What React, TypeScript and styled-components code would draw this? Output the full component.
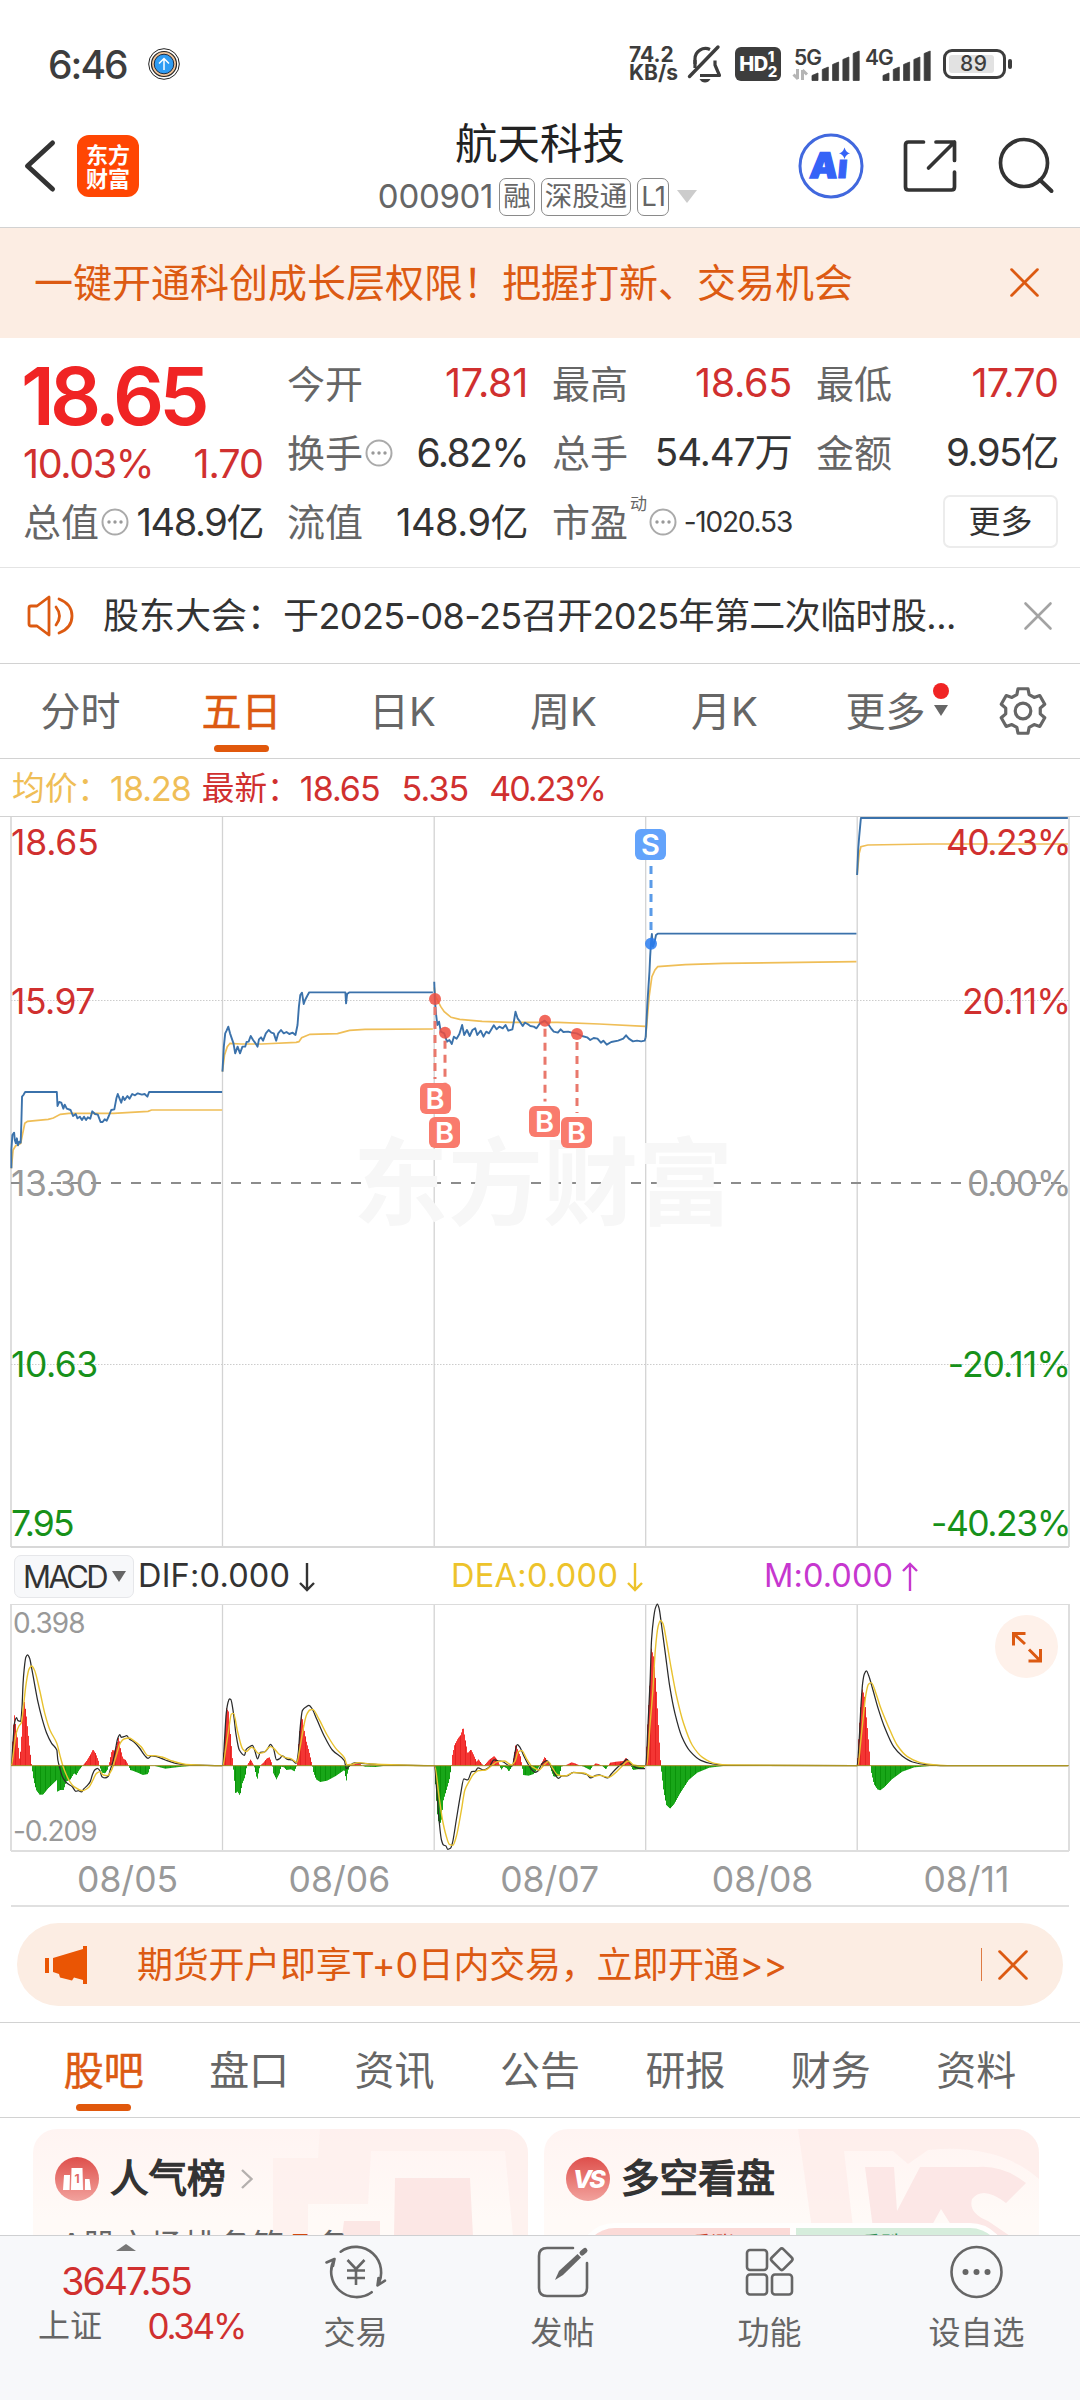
import React from "react";
import styled, { createGlobalStyle } from "styled-components";

const C = {
  ink: "#333333",
  grey: "#666666",
  light: "#999999",
  line: "#d2d2d2",
  red: "#d0302f",
  green: "#17911a",
  orange: "#dc5a12",
  peach: "#fcede3",
  blue: "#3b72ab",
  yellow: "#efbe57",
};

const Global = createGlobalStyle`
  * { box-sizing: border-box; }
  html, body { margin: 0; padding: 0; background: #ffffff; }
  body {
    width: 1080px;
    height: 2400px;
    overflow: hidden;
    font-family: Inter, "Noto Sans CJK SC", sans-serif;
    line-height: 1;
    color: ${C.ink};
  }
  svg { display: block; flex: none; overflow: visible; }
`;

const Page = styled.main`
  width: 1080px;
  height: 2400px;
  display: flex;
  flex-direction: column;
  overflow: hidden;
`;

interface TxtProps {
  $size: number;
  $color?: string;
  $ls?: number;
  $weight?: number;
  $ml?: number;
  $mt?: number;
}
const Txt = styled.span<TxtProps>`
  font-size: ${(p) => p.$size}px;
  color: ${(p) => p.$color ?? C.ink};
  letter-spacing: ${(p) => p.$ls ?? 0}px;
  margin-left: ${(p) => p.$ml ?? 0}px;
  margin-top: ${(p) => p.$mt ?? 0}px;
  font-weight: ${(p) => p.$weight ?? 400};
  white-space: pre;
  line-height: 1;
`;

/* ---------- status bar ---------- */

const StatusBar = styled.div`
  height: 104px;
  padding: 24px 68px 0 48px;
  display: flex;
  align-items: center;
  gap: 20px;
  flex: none;
`;
const StatusRight = styled.div`
  margin-left: auto;
  display: flex;
  align-items: center;
`;
const Speed = styled.div`
  width: 59px;
  font-size: 21px;
  font-weight: 700;
  line-height: 18px;
  color: #3d3d3d;
`;
const HdBox = styled.div`
  width: 46px;
  height: 34px;
  margin: 0 11px 0 13px;
  border-radius: 6px;
  background: #3d3d3d;
  color: #fff;
  display: flex;
  align-items: center;
  justify-content: center;
  font-size: 20px;
  font-weight: 800;
  letter-spacing: -0.5px;
`;
const HdNums = styled.div`
  display: flex;
  flex-direction: column;
  font-size: 15px;
  line-height: 15px;
`;
const Signal = styled.div`
  width: 71px;
  height: 34px;
  display: grid;
`;
const SignalName = styled.div`
  grid-area: 1 / 1;
  padding-left: 2px;
  font-size: 21px;
  font-weight: 600;
  letter-spacing: -1px;
  color: #3d3d3d;
`;
const SignalArt = styled.svg`
  grid-area: 1 / 1;
`;
const Battery = styled.div`
  width: 63px;
  height: 30px;
  margin-left: 9px;
  border: 3px solid #3d3d3d;
  border-radius: 9px;
  padding: 3px;
`;
const BatteryFill = styled.div`
  width: 45px;
  height: 18px;
  padding-left: 11px;
  border-radius: 3px;
  background: #e2e2e2;
  font-size: 21px;
  font-weight: 500;
  line-height: 18px;
  letter-spacing: 0.5px;
  color: #3d3d3d;
`;
const BatteryNub = styled.div`
  width: 4px;
  height: 10px;
  margin-left: 2px;
  border-radius: 2px;
  background: #3d3d3d;
`;

function Bars({ name, data }: { name: string; data?: boolean }) {
  const tops = [26, 20, 15, 10, 4];
  return (
    <Signal>
      <SignalName>{name}</SignalName>
      <SignalArt width="71" height="34" viewBox="0 0 71 34">
        {tops.map((t, i) => (
          <path
            key={i}
            d={`M${20 + i * 10.3} 33.5V${t + 2.5}l6 -2.5V33.5z`}
            fill="#3d3d3d"
            stroke="#3d3d3d"
            strokeWidth="0.8"
            strokeLinejoin="round"
          />
        ))}
        {data && (
          <path d="M5.500 22V32M1.500 27.500l4.500 4.500M10.500 33V23M15 27.500l-4.500-4.500" stroke="#b5b5b5" strokeWidth="3" fill="none" />
        )}
      </SignalArt>
    </Signal>
  );
}

function Status() {
  return (
    <StatusBar>
      <Txt $size={39} $weight={500} $color="#3d3d3d" $ls={-2}>6:46</Txt>
      <svg width="34" height="34" viewBox="0 0 34 34">
        <circle cx="17" cy="17" r="15.300" fill="#fff" stroke="#222" strokeWidth="1" />
        <circle cx="17" cy="17" r="12.500" fill="#edc298" stroke="#222" strokeWidth="1.200" />
        <circle cx="17" cy="17" r="9.800" fill="#2f9cf3" stroke="#1d2d44" strokeWidth="1" />
        <path d="M17 23V12M12 16.500l5-5 5 5" stroke="#fff" strokeWidth="1.500" fill="none" />
      </svg>
      <StatusRight>
        <Speed>74.2<br />KB/s</Speed>
        <svg width="34" height="38" viewBox="0 0 34 38">
          <path d="M7 19V14a10.500 10.500 0 0 1 15-9.500M27 15.500V20l4.500 10.500H12" stroke="#3d3d3d" strokeWidth="3.200" fill="none" strokeLinejoin="round" />
          <path d="M7 15v8" stroke="#3d3d3d" strokeWidth="3.200" />
          <path d="M1.500 31.500L30 2" stroke="#3d3d3d" strokeWidth="3.400" strokeLinecap="round" />
          <path d="M11.500 34h11q-2 3.500-5.500 3.500T11.500 34z" fill="#3d3d3d" />
        </svg>
        <HdBox>HD<HdNums><span>1</span><span>2</span></HdNums></HdBox>
        <Bars name="5G" data />
        <Bars name="4G" />
        <Battery><BatteryFill>89</BatteryFill></Battery>
        <BatteryNub />
      </StatusRight>
    </StatusBar>
  );
}

/* ---------- header ---------- */

const HeaderBar = styled.header`
  height: 124px;
  border-bottom: 1px solid ${C.line};
  display: grid;
  grid-template-columns: 360px 360px 360px;
  flex: none;
`;
const HeaderLeft = styled.div`
  display: flex;
  align-items: center;
  padding-left: 24px;
`;
const AppLogo = styled.div`
  width: 62px;
  height: 62px;
  margin-left: 22px;
  padding-top: 8px;
  border-radius: 12px;
  background: #ff4603;
  color: #fff;
  font-size: 22px;
  font-weight: 700;
  line-height: 24px;
  text-align: center;
`;
const TitleBox = styled.div`
  display: flex;
  flex-direction: column;
  align-items: center;
  padding-top: 19px;
  gap: 11px;
`;
const CodeRow = styled.div`
  height: 40px;
  display: flex;
  align-items: center;
  gap: 6px;
  margin-left: -3px;
`;
const Tag = styled.span<{ $ls?: number }>`
  height: 38px;
  padding: 0 3px;
  border: 1.5px solid #8a8a8a;
  border-radius: 7px;
  font-size: 27.5px;
  line-height: 35px;
  letter-spacing: ${(p) => p.$ls ?? 0}px;
  color: ${C.grey};
`;
const HeaderRight = styled.div`
  display: flex;
  align-items: center;
  padding: 1px 0 0 78px;
`;
const ShareIcon = styled.svg`
  margin-left: 39px;
`;
const SearchIcon = styled.svg`
  margin-left: 42px;
`;

function Header() {
  return (
    <HeaderBar>
      <HeaderLeft>
        <svg width="31" height="52" viewBox="0 0 31 52">
          <path d="M28.500 3L3.500 26l25 23" stroke="#333" strokeWidth="5" fill="none" strokeLinecap="round" strokeLinejoin="round" />
        </svg>
        <AppLogo>东方<br />财富</AppLogo>
      </HeaderLeft>
      <TitleBox>
        <Txt $size={42.5} $color="#222">航天科技</Txt>
        <CodeRow>
          <Txt $size={33} $color={C.grey} $ls={-0.3}>000901</Txt>
          <Tag>融</Tag>
          <Tag>深股通</Tag>
          <Tag $ls={-0.8}>L1</Tag>
          <svg width="24" height="14" viewBox="0 0 24 14"><path d="M2 0h20L12 13z" fill="#ccc" /></svg>
        </CodeRow>
      </TitleBox>
      <HeaderRight>
        <svg width="66" height="66" viewBox="0 0 66 66">
          <circle cx="33" cy="33" r="31" fill="none" stroke="#4168de" strokeWidth="3" />
          <text x="12" y="45" fontSize="35" fontWeight="900" fill="#3563f7" stroke="#3563f7" strokeWidth="1.500" transform="skewX(-5) translate(3 0)" fontFamily="Inter, sans-serif">A</text>
          <text x="39" y="45.500" fontSize="33" fontWeight="900" fill="#3563f7" stroke="#3563f7" strokeWidth="1" transform="skewX(-5) translate(4 0)" fontFamily="Inter, sans-serif">ı</text>
          <path d="M46.500 14.500q1.500 5 5.500 5.800-4 1-5.500 5.700-1.500-4.700-5.500-5.700 4-.8 5.500-5.800z" fill="#3563f7" />
        </svg>
        <ShareIcon width="54" height="54" viewBox="0 0 54 54">
          <path d="M20.500 3H5.500Q2.500 3 2.500 6V48Q2.500 51 5.500 51H48.500Q51.500 51 51.500 48V33M33 3H51.500V21.500M51.500 3L25.500 29" stroke="#333" strokeWidth="3.700" fill="none" strokeLinejoin="round" strokeLinecap="round" />
        </ShareIcon>
        <SearchIcon width="56" height="56" viewBox="0 0 56 56">
          <circle cx="25" cy="25" r="23.500" stroke="#333" strokeWidth="3.700" fill="none" />
          <path d="M41 42L52.500 53" stroke="#333" strokeWidth="4" strokeLinecap="round" />
        </SearchIcon>
      </HeaderRight>
    </HeaderBar>
  );
}

/* ---------- banner ---------- */

const Banner = styled.div`
  height: 110px;
  padding: 0 41px 1px 34px;
  background: ${C.peach};
  display: flex;
  align-items: center;
  justify-content: space-between;
  flex: none;
`;

function Cross({ size, color, w = 2.6 }: { size: number; color: string; w?: number }) {
  return (
    <svg width={size} height={size} viewBox="0 0 28 28">
      <path d="M1.500 1.500l25 25M26.500 1.500l-25 25" stroke={color} strokeWidth={w} strokeLinecap="round" />
    </svg>
  );
}

/* ---------- quote ---------- */

const Quote = styled.section`
  height: 230px;
  padding: 11px 22px 0 23px;
  border-bottom: 1px solid #e4e4e4;
  display: grid;
  grid-template-columns: 240px 241px 240px 242px;
  column-gap: 24px;
  flex: none;
`;
const QCol = styled.div`
  display: grid;
  grid-template-rows: 69px 69px 69px;
`;
const QFirst = styled(QCol)`
  grid-template-rows: 93px 45px 69px;
`;
const QRow = styled.div<{ $end?: boolean }>`
  display: flex;
  align-items: center;
  justify-content: ${(p) => (p.$end ? "flex-end" : "space-between")};
`;
const Label = styled.span`
  display: flex;
  align-items: center;
  gap: 2px;
  font-size: 38px;
  color: ${C.grey};
`;
const Sup = styled.span`
  align-self: flex-start;
  font-size: 17px;
  margin-top: -7px;
`;
const MoreButton = styled.button`
  width: 115px;
  height: 53px;
  padding: 0;
  border: 2px solid #ececec;
  border-radius: 7px;
  background: #fff;
  font: 400 32px/1 Inter, "Noto Sans CJK SC", sans-serif;
  color: ${C.ink};
`;

function Dots() {
  return (
    <svg width="28" height="28" viewBox="0 0 28 28">
      <circle cx="14" cy="14" r="12.500" fill="none" stroke="#aaa" strokeWidth="2" />
      {[8, 14, 20].map((x) => <circle key={x} cx={x} cy="14" r="1.700" fill="#999" />)}
    </svg>
  );
}

function QuoteBlock() {
  return (
    <Quote>
      <QFirst>
        <QRow><Txt $size={80} $weight={600} $color="#f02424" $ls={-4.9} $ml={-2}>18.65</Txt></QRow>
        <QRow>
          <Txt $size={39.5} $color={C.red} $ls={-1.4}>10.03%</Txt>
          <Txt $size={39.5} $color={C.red} $ls={-1}>1.70</Txt>
        </QRow>
        <QRow>
          <Label>总值<Dots /></Label>
          <Txt $size={38} $ls={-1.4}>148.9亿</Txt>
        </QRow>
      </QFirst>
      <QCol>
        <QRow><Label>今开</Label><Txt $size={39.5} $color={C.red} $ls={-0.3}>17.81</Txt></QRow>
        <QRow><Label>换手<Dots /></Label><Txt $size={39} $ls={-1.6}>6.82%</Txt></QRow>
        <QRow><Label>流值</Label><Txt $size={38} $ls={-0.5}>148.9亿</Txt></QRow>
      </QCol>
      <QCol>
        <QRow><Label>最高</Label><Txt $size={39.5} $color={C.red} $ls={-0.3}>18.65</Txt></QRow>
        <QRow><Label>总手</Label><Txt $size={38.5} $ls={-1}>54.47万</Txt></QRow>
        <QRow>
          <Label>市盈<Sup>动</Sup><Dots /></Label>
          <Txt $size={28} $ls={-1.2}>-1020.53</Txt>
        </QRow>
      </QCol>
      <QCol>
        <QRow><Label>最低</Label><Txt $size={39.5} $color={C.red} $ls={-0.9}>17.70</Txt></QRow>
        <QRow><Label>金额</Label><Txt $size={38.5} $ls={-1.5}>9.95亿</Txt></QRow>
        <QRow $end><MoreButton>更多</MoreButton></QRow>
      </QCol>
    </Quote>
  );
}

/* ---------- notice ---------- */

const Notice = styled.div`
  height: 96px;
  padding: 0 28px 0 26px;
  border-bottom: 1px solid ${C.line};
  display: flex;
  align-items: center;
  flex: none;
`;
const NoticeText = styled.div`
  flex: 1;
  padding-left: 28px;
`;

/* ---------- period tabs ---------- */

const PeriodTabs = styled.nav`
  height: 95px;
  border-bottom: 1px solid ${C.line};
  display: grid;
  grid-template-columns: repeat(6, 161px) 114px;
  flex: none;
`;
const Tab = styled.div<{ $on?: boolean }>`
  display: grid;
  grid-template-rows: 81px 7px;
  justify-items: center;
  align-items: center;
  font-size: 40px;
  -webkit-text-stroke: ${(p) => (p.$on ? "0.5px" : "0")} ${C.orange};
  color: ${(p) => (p.$on ? C.orange : C.grey)};
  &::after {
    content: "";
    width: 55px;
    height: 7px;
    border-radius: 4px;
    background: ${(p) => (p.$on ? "#e1580c" : "transparent")};
  }
`;
const TabText = styled.span`
  position: relative;
  padding-top: 14px;
`;
const MoreMark = styled.svg`
  position: absolute;
  left: 82px;
  top: 5px;
`;
const GearCell = styled.div`
  display: flex;
  align-items: center;
  justify-content: center;
`;

function Gear() {
  const pts: string[] = [];
  for (let i = 0; i < 6; i++) {
    const a = (i * Math.PI) / 3 - Math.PI / 2;
    const at = (r: number, d: number) => `${(25 + r * Math.cos(a + d)).toFixed(2)},${(25 + r * Math.sin(a + d)).toFixed(2)}`;
    pts.push(at(17.5, -0.36), at(22.8, -0.22), at(22.8, 0.22), at(17.5, 0.36));
  }
  return (
    <svg width="50" height="50" viewBox="0 0 50 50">
      <polygon points={pts.join(" ")} fill="none" stroke={C.grey} strokeWidth="3.200" strokeLinejoin="round" />
      <circle cx="25" cy="25" r="7.800" fill="none" stroke={C.grey} strokeWidth="3.200" />
    </svg>
  );
}

/* ---------- price chart ---------- */

const Legend = styled.div`
  height: 58px;
  padding: 2px 0 0 12px;
  border-bottom: 1px solid ${C.line};
  display: flex;
  align-items: center;
  flex: none;
`;
const ChartBox = styled.div`
  position: relative;
  height: 731px;
  flex: none;
`;
const AxisLabel = styled.span<{ $y: number; $right?: boolean; $color: string; $ls?: number }>`
  position: absolute;
  top: ${(p) => p.$y - 17}px;
  ${(p) => (p.$right ? "right: 10px;" : "left: 11px;")}
  font-size: 35.5px;
  line-height: 36px;
  letter-spacing: ${(p) => p.$ls ?? (p.$right ? -1.5 : -0.2)}px;
  color: ${(p) => p.$color};
`;
const Watermark = styled.span`
  position: absolute;
  left: 353px;
  top: 317px;
  font-size: 95px;
  line-height: 100px;
  font-weight: 700;
  color: #f7f7f7;
`;
const Marker = styled.span<{ $x: number; $y: number; $sell?: boolean }>`
  position: absolute;
  left: ${(p) => p.$x}px;
  top: ${(p) => p.$y}px;
  width: 31px;
  height: 31px;
  border-radius: 6px;
  background: ${(p) => (p.$sell ? "#63a3fb" : "#f97b6d")};
  color: #fff;
  font-size: 29px;
  font-weight: 600;
  line-height: 31px;
  text-align: center;
`;

type Pts = number[];

/* Series are sampled on a fine grid of 2.904 x 3 units per pixel. */
const GRID = "scale(0.34436 0.33333)";

const price: Pts[] = [
  [33,1255,33,1200,36,1155,41,1148,43,1170,46,1180,49,1165,52,1186,56,1175,60,1178,62,1120,64,1040,68,1035,73,1026,165,1026,167,1068,172,1056,178,1058,184,1076,188,1064,194,1076,205,1080,212,1098,220,1092,225,1105,232,1100,238,1110,244,1100,250,1110,255,1102,262,1106,268,1084,276,1092,284,1094,292,1116,298,1116,304,1108,310,1112,316,1098,323,1080,332,1078,338,1045,342,1032,347,1045,352,1058,357,1040,362,1050,370,1038,376,1046,384,1032,392,1036,400,1030,412,1034,420,1032,428,1040,433,1026,645,1026],
  [646,965,650,890,654,850,658,842,663,830,668,850,673,865,678,880,683,910,690,890,697,910,704,890,712,890,716,876,722,875,728,858,735,870,742,880,748,890,752,868,758,862,764,872,772,850,780,840,788,848,795,850,802,872,808,850,816,840,824,850,832,846,840,852,850,848,858,855,864,825,868,770,872,735,877,728,882,762,886,750,892,738,898,727,1003,727,1005,760,1008,732,1015,727,1257,727],
  [1261,695,1263,750,1266,790,1270,825,1275,815,1280,845,1290,850,1298,875,1305,870,1312,882,1318,860,1326,866,1334,852,1342,825,1348,855,1356,840,1364,858,1372,840,1380,835,1386,855,1396,842,1404,860,1412,845,1420,850,1434,826,1442,838,1450,830,1460,835,1468,825,1476,842,1488,838,1493,810,1497,785,1503,805,1510,815,1518,828,1524,818,1532,822,1540,828,1550,830,1558,835,1568,820,1582,812,1590,820,1600,835,1608,845,1620,848,1628,838,1636,846,1650,845,1660,848,1675,850,1690,858,1705,862,1714,870,1724,864,1735,866,1745,878,1752,872,1762,884,1775,876,1795,872,1810,866,1818,856,1826,866,1838,874,1850,872,1862,874,1872,872,1875,862],
  [1875,862,1880,760,1886,665,1888,620,1891,570,1893,552,1896,590,1901,575,1905,555,1910,551,2487,551],
  [2489,375,2492,300,2495,260,2500,204,3101,204],
];
const average: Pts[] = [
  [33,1255,38,1200,45,1188,60,1180,66,1150,72,1120,80,1114,140,1108,155,1104,175,1093,200,1090,330,1090,430,1084,440,1080,645,1080],
  [646,965,652,915,660,890,668,880,700,882,760,882,860,877,868,875,876,863,900,853,980,851,1015,841,1060,838,1257,837],
  [1261,712,1265,740,1280,770,1290,785,1310,802,1335,808,1400,814,1480,817,1568,817,1620,817,1740,822,1874,829],
  [1875,862,1885,740,1893,680,1902,660,1910,650,1990,644,2100,640,2487,635],
  [2489,375,2495,310,2500,290,2520,285,2700,282,3101,282],
];

const toPoints = (a: Pts) => {
  const out: string[] = [];
  for (let i = 0; i < a.length; i += 2) out.push(`${a[i]},${a[i + 1]}`);
  return out.join(" ");
};

const columns = [11, 222.5, 434.2, 645.7, 857.2, 1069];

const trades = [
  { dx: 435, dy: 182, bx: 419.5, by: 266 },
  { dx: 445, dy: 215.7, bx: 429, by: 300 },
  { dx: 545, dy: 203.7, bx: 529, by: 288.5 },
  { dx: 577, dy: 217, bx: 561, by: 300 },
];

function PriceChart() {
  return (
    <ChartBox>
      <Watermark>东方财富</Watermark>
      <svg width="1080" height="731" viewBox="0 0 1080 731">
        {columns.map((x, i) => (
          <path key={x} d={`M${x} 0V730`} stroke={i === 0 || i === 5 ? "#dedede" : "#d3d3d3"} strokeWidth={i === 0 || i === 5 ? 2 : 1.3} />
        ))}
        <path d="M11 183.500H1069M11 547.500H1069" stroke="#ccc" strokeWidth="1" strokeDasharray="1.500 1.500" />
        <path d="M11 730H1069" stroke="#d8d8d8" strokeWidth="2" />
        <path d="M11 366H1069" stroke="#8c8c8c" strokeWidth="1.800" strokeDasharray="10 10" />
        <g transform={`${GRID} translate(0 -201)`} fill="none">
          {average.map((a, i) => (
            <polyline key={i} points={toPoints(a)} stroke={C.yellow} strokeWidth="1.700" vectorEffect="non-scaling-stroke" />
          ))}
          {price.map((a, i) => (
            <polyline key={i} points={toPoints(a)} stroke={C.blue} strokeWidth="1.900" strokeLinejoin="round" vectorEffect="non-scaling-stroke" />
          ))}
        </g>
        {trades.map((t) => (
          <g key={t.dx}>
            <path d={`M${t.dx} ${t.dy + 8}V${t.by - 4}`} stroke="#e9786c" strokeWidth="3" strokeDasharray="8 6" />
            <circle cx={t.dx} cy={t.dy} r="6" fill="#ee4d3f" opacity="0.850" />
          </g>
        ))}
        <path d="M651 49V118" stroke="#5b9be8" strokeWidth="3" strokeDasharray="8 6" />
        <circle cx="651" cy="126.700" r="6" fill="#2a7df0" opacity="0.850" />
      </svg>
      {trades.map((t) => <Marker key={t.bx} $x={t.bx} $y={t.by}>B</Marker>)}
      <Marker $x={635} $y={12} $sell>S</Marker>
      <AxisLabel $y={25} $color={C.red}>18.65</AxisLabel>
      <AxisLabel $y={184} $color={C.red} $ls={-0.5}>15.97</AxisLabel>
      <AxisLabel $y={366} $color={C.light} $ls={-0.5}>13.30</AxisLabel>
      <AxisLabel $y={547} $color={C.green} $ls={-0.5}>10.63</AxisLabel>
      <AxisLabel $y={706} $color={C.green} $ls={-1.9}>7.95</AxisLabel>
      <AxisLabel $y={25} $color={C.red} $right>40.23%</AxisLabel>
      <AxisLabel $y={184} $color={C.red} $right $ls={-1}>20.11%</AxisLabel>
      <AxisLabel $y={366} $color={C.light} $right>0.00%</AxisLabel>
      <AxisLabel $y={547} $color={C.green} $right $ls={-1}>-20.11%</AxisLabel>
      <AxisLabel $y={706} $color={C.green} $right>-40.23%</AxisLabel>
    </ChartBox>
  );
}

/* ---------- MACD ---------- */

const MacdRow = styled.div`
  height: 56px;
  padding: 1px 0 0 14px;
  display: grid;
  grid-template-columns: 124px 313px 313px 1fr;
  align-items: center;
  flex: none;
`;
const MacdChip = styled.div`
  width: 120px;
  height: 43px;
  padding: 0 7px 0 8px;
  border: 1.5px solid #e6e7ea;
  border-radius: 7px;
  background: #f7f8fa;
  display: flex;
  align-items: center;
  justify-content: space-between;
`;
const MacdValue = styled.div`
  display: flex;
  align-items: center;
  gap: 8px;
`;
const MacdBox = styled.div`
  position: relative;
  height: 248px;
  flex: none;
`;
const MacdLabel = styled.span<{ $y: number; $ls: number }>`
  position: absolute;
  left: 13px;
  top: ${(p) => p.$y - 14}px;
  font-size: 28px;
  line-height: 28px;
  letter-spacing: ${(p) => p.$ls}px;
  color: ${C.light};
`;
const Expand = styled.button`
  position: absolute;
  left: 995px;
  top: 11px;
  width: 63px;
  height: 63px;
  padding: 0;
  border: 0;
  border-radius: 50%;
  background: #fef1ea;
  display: flex;
  align-items: center;
  justify-content: center;
`;
const Dates = styled.div`
  height: 55px;
  margin: 0 11px;
  border-bottom: 2px solid #e0e0e0;
  display: grid;
  grid-template-columns: repeat(5, 1fr);
  align-items: center;
  flex: none;
`;
const DateCell = styled.span`
  padding: 2px 0 0 66px;
  font-size: 35.5px;
  color: ${C.light};
`;

const dif: Pts[] = [
  [33,557,37,500,42,430,48,413,52,422,60,424,64,380,67,310,70,270,75,232,80,225,86,235,92,265,100,310,110,365,122,415,135,458,150,490,165,510,168,540,174,565,182,592,195,610,210,620,220,634,228,632,236,636,244,626,254,616,262,605,268,585,275,570,283,565,290,572,296,590,305,594,315,588,320,570,328,545,335,510,342,475,348,464,352,472,360,470,368,467,375,476,390,487,405,504,420,526,430,535,440,528,455,530,480,540,510,550,550,555,645,557],
  [647,557,652,480,657,400,662,368,666,357,670,358,678,400,685,460,695,510,710,526,715,508,725,500,733,496,740,512,748,537,756,517,768,516,778,505,785,493,794,505,803,540,812,536,820,528,835,538,848,540,860,550,866,520,872,440,878,392,890,380,897,376,905,384,920,418,940,465,965,510,1000,542,1006,566,1015,557,1030,549,1050,550,1120,555,1261,557],
  [1262,557,1268,630,1275,720,1282,780,1288,795,1295,798,1300,808,1308,805,1314,788,1325,720,1338,640,1347,597,1358,600,1370,575,1380,574,1388,564,1405,570,1420,562,1435,540,1448,543,1460,545,1478,557,1488,558,1495,520,1502,494,1510,502,1520,525,1535,555,1545,570,1555,577,1563,572,1575,550,1588,542,1598,555,1610,580,1622,595,1632,588,1645,588,1665,577,1690,580,1705,584,1715,594,1730,586,1740,585,1765,594,1775,582,1795,560,1810,548,1820,538,1830,550,1845,562,1860,566,1873,566],
  [1875,557,1882,430,1888,300,1892,180,1898,115,1903,85,1909,72,1914,85,1921,135,1932,220,1945,320,1960,400,1980,470,2005,515,2035,541,2070,552,2110,556,2489,557],
  [2489,557,2495,480,2500,380,2505,310,2510,282,2516,273,2522,285,2535,330,2550,385,2570,445,2595,500,2620,528,2650,546,2690,554,2740,557,3101,557],
];
const dea: Pts[] = [
  [33,557,40,510,47,460,55,438,62,428,68,380,76,310,84,268,92,258,100,270,115,330,130,400,145,450,165,490,175,530,185,565,200,600,215,620,240,632,258,622,270,600,280,580,290,575,300,585,312,587,325,568,338,525,350,488,360,477,375,474,390,483,410,500,430,527,445,527,470,531,500,543,540,553,645,557],
  [647,557,655,510,664,450,672,402,678,400,690,455,705,508,715,515,730,502,738,506,750,520,765,518,785,500,795,505,810,522,830,533,845,536,862,547,870,510,880,450,890,405,900,390,908,388,925,415,950,465,975,505,1000,533,1008,555,1020,553,1040,548,1080,552,1261,557],
  [1262,557,1275,650,1285,720,1295,765,1305,793,1315,796,1325,770,1340,690,1350,630,1362,605,1375,583,1390,572,1410,570,1430,555,1445,545,1465,543,1485,555,1495,545,1505,515,1515,512,1530,538,1548,562,1565,570,1580,555,1592,545,1605,565,1620,585,1640,588,1665,578,1695,579,1720,590,1740,586,1768,592,1785,580,1805,560,1825,543,1840,555,1873,560],
  [1878,557,1888,430,1896,330,1903,210,1911,140,1918,121,1925,130,1935,180,1950,270,1965,350,1985,430,2010,495,2040,532,2075,550,2115,555,2489,557],
  [2491,557,2500,480,2508,400,2515,340,2522,313,2530,308,2542,335,2558,385,2580,440,2605,495,2635,530,2670,547,2710,554,2760,557,3101,557],
];
const hist: Pts = [
  33,557,36,490,40,420,42,405,46,440,52,480,56,535,58,537,62,480,66,390,71,365,76,400,80,440,86,500,92,557,98,600,105,630,115,644,125,644,140,625,155,610,165,600,167,635,175,630,185,630,192,605,205,598,215,580,222,585,230,570,240,557,250,545,262,525,270,508,278,520,287,545,289,557,296,578,305,580,312,570,316,557,325,510,335,512,345,470,350,505,357,535,365,540,374,557,378,570,385,572,400,578,415,585,430,582,437,557,450,558,480,566,520,561,560,557,
  646,557,652,480,657,383,664,395,670,470,677,557,680,590,684,640,690,635,697,647,704,610,712,590,717,557,728,538,738,557,747,600,755,557,765,548,775,535,783,532,789,548,791,557,794,580,803,598,812,580,816,560,825,562,832,570,845,568,855,574,862,557,870,450,876,402,882,440,890,485,898,515,907,557,910,575,918,598,930,606,950,602,975,588,1000,570,1006,603,1010,575,1016,557,1025,553,1045,551,1052,557,1060,560,1090,561,1120,557,
  1262,557,1266,640,1271,710,1276,738,1282,720,1288,660,1298,625,1305,600,1311,557,1313,530,1320,495,1330,475,1338,465,1345,440,1350,470,1358,520,1368,508,1376,525,1384,545,1390,538,1398,550,1405,557,1410,552,1420,540,1435,528,1445,540,1452,557,1455,570,1463,560,1472,565,1478,575,1488,557,1492,530,1498,490,1503,508,1512,530,1516,557,1520,585,1535,587,1550,582,1562,565,1568,557,1575,545,1582,530,1590,545,1597,557,1602,575,1608,590,1625,588,1630,560,1640,557,1650,552,1660,547,1670,550,1685,557,1695,560,1714,570,1722,557,1730,550,1738,552,1748,557,1760,568,1766,557,1772,548,1790,545,1810,543,1818,533,1830,548,1832,557,1838,570,1850,568,1870,566,1873,557,
  1875,557,1880,440,1886,320,1892,205,1898,230,1905,310,1912,430,1919,557,1921,575,1927,630,1935,675,1946,686,1958,672,1975,640,2000,600,2025,578,2060,563,2100,558,2110,557,
  2489,557,2494,460,2499,380,2503,323,2510,345,2518,430,2524,500,2528,557,2531,580,2538,612,2548,628,2556,631,2568,622,2590,598,2620,575,2655,562,2700,558,2710,557,3101,557,
];

/* Monotone cubic through the samples, so peaks keep their height. */
const smooth = (a: Pts) => {
  const n = a.length / 2;
  const X = (i: number) => a[2 * Math.max(0, Math.min(n - 1, i))];
  const Y = (i: number) => a[2 * Math.max(0, Math.min(n - 1, i)) + 1];
  const slope = (k: number) => {
    const l = (Y(k) - Y(k - 1)) / (X(k) - X(k - 1) || 1);
    const r = (Y(k + 1) - Y(k)) / (X(k + 1) - X(k) || 1);
    return l * r <= 0 ? 0 : (2 * l * r) / (l + r);
  };
  let d = `M${X(0)} ${Y(0)}`;
  for (let i = 0; i < n - 1; i++) {
    const w = X(i + 1) - X(i);
    d += `C${X(i) + w / 3} ${Y(i) + (slope(i) * w) / 3} ${X(i + 1) - w / 3} ${Y(i + 1) - (slope(i + 1) * w) / 3} ${X(i + 1)} ${Y(i + 1)}`;
  }
  return d;
};

/* One bar per pixel column of the panel. */
const histY = (x: number) => {
  let k = 0;
  while (k + 2 < hist.length && hist[k + 2] < x) k += 2;
  const t = (x - hist[k]) / (hist[k + 2] - hist[k] || 1);
  return hist[k + 1] + t * (hist[k + 3] - hist[k + 1]);
};
const BASE = (557 - 72) / 3;
const buildBars = () => {
  const bars: { x: number; y: number; fill: string }[] = [];
  for (let px = 11; px < 936; px++) {
    const y = (histY((px + 0.5) * 2.904) - 72) / 3;
    if (Math.abs(y - BASE) < 0.4) continue;
    const dark = px % 5 === 0;
    bars.push({ x: px, y, fill: y < BASE ? (dark ? "#e52222" : "#f43533") : dark ? "#0a930a" : "#18a618" });
  }
  return bars;
};
const histBars = buildBars();

function Arrow({ color, up }: { color: string; up?: boolean }) {
  return (
    <svg width="18" height="30" viewBox="0 0 18 30">
      <path d={up ? "M9 29V2M2 9l7-7 7 7" : "M9 1V28M2 21l7 7 7-7"} stroke={color} strokeWidth="2.400" fill="none" />
    </svg>
  );
}

function Macd() {
  return (
    <>
      <MacdRow>
        <MacdChip>
          <Txt $size={31} $ls={-2.6}>MACD</Txt>
          <svg width="14" height="12" viewBox="0 0 14 12"><path d="M0 0h14L7 11z" fill={C.grey} /></svg>
        </MacdChip>
        <MacdValue><Txt $size={32.5} $ls={0.2}>DIF:0.000</Txt><Arrow color={C.ink} /></MacdValue>
        <MacdValue><Txt $size={32.5} $color="#edc32b" $ls={0.3}>DEA:0.000</Txt><Arrow color="#edc32b" /></MacdValue>
        <MacdValue><Txt $size={32.5} $color="#c637cf" $ls={0.1}>M:0.000</Txt><Arrow color="#c637cf" up /></MacdValue>
      </MacdRow>
      <MacdBox>
        <svg width="1080" height="248" viewBox="0 0 1080 248">
          {columns.map((x, i) => (
            <path key={x} d={`M${x} 0V247`} stroke={i === 0 || i === 5 ? "#dedede" : "#d3d3d3"} strokeWidth={i === 0 || i === 5 ? 2 : 1.3} />
          ))}
          <path d="M11 0.500H1069" stroke="#dcdcdc" strokeWidth="1" />
          <path d="M11 247H1069" stroke="#dedede" strokeWidth="2" />
          {histBars.map((b) => (
            <rect key={b.x} x={b.x} width="1" y={Math.min(b.y, BASE)} height={Math.abs(b.y - BASE)} fill={b.fill} />
          ))}
          <g transform={`${GRID} translate(0 -72)`} fill="none">
            {dif.map((a, i) => <path key={i} d={smooth(a)} stroke="#2b2b2b" strokeWidth="1.250" vectorEffect="non-scaling-stroke" />)}
            {dea.map((a, i) => <path key={i} d={smooth(a)} stroke="#e8c22f" strokeWidth="1.400" vectorEffect="non-scaling-stroke" />)}
            <path d="M33 557H3104" stroke="#a08c22" strokeWidth="1" vectorEffect="non-scaling-stroke" />
          </g>
        </svg>
        <MacdLabel $y={19} $ls={-0.9}>0.398</MacdLabel>
        <MacdLabel $y={227} $ls={-1.1}>-0.209</MacdLabel>
        <Expand>
          <svg width="32" height="32" viewBox="0 0 32 32">
            <path d="M14.500 2.500H2.500V14.500M3 3L14 13M17.500 30H29.500V18M29 29.500L18 18.500" stroke={C.orange} strokeWidth="3" fill="none" />
          </svg>
        </Expand>
      </MacdBox>
      <Dates>
        {["08/05", "08/06", "08/07", "08/08", "08/11"].map((d) => <DateCell key={d}>{d}</DateCell>)}
      </Dates>
    </>
  );
}

/* ---------- promo ---------- */

const PromoWrap = styled.div`
  height: 116px;
  padding: 16px 17px;
  border-bottom: 1px solid ${C.line};
  flex: none;
`;
const Promo = styled.div`
  height: 83px;
  padding: 0 35px 0 28px;
  border-radius: 42px;
  background: ${C.peach};
  display: flex;
  align-items: center;
`;
const PromoText = styled.div`
  flex: 1;
  padding-left: 49px;
`;
const Divider = styled.div`
  width: 1.5px;
  height: 33px;
  margin-right: 16px;
  background: #de7a42;
`;

/* ---------- section tabs ---------- */

const SectionTabs = styled.nav`
  height: 95px;
  padding: 0 31px;
  border-bottom: 1px solid ${C.line};
  display: grid;
  grid-template-columns: repeat(7, 1fr);
  flex: none;
`;

/* ---------- cards ---------- */

const Cards = styled.div`
  height: 117px;
  padding: 11px 41px 0 33px;
  display: grid;
  grid-template-columns: 495px 495px;
  column-gap: 16px;
  overflow: hidden;
  flex: none;
`;
const Card = styled.div`
  position: relative;
  height: 200px;
  padding: 28px 22px 0;
  border-radius: 24px;
  background: linear-gradient(180deg, #fff4f2 0, #fffaf7 90px);
  overflow: hidden;
`;
const CardArt = styled.svg`
  position: absolute;
  right: 0;
  top: 0;
`;
const CardHead = styled.div`
  position: relative;
  display: flex;
  align-items: center;
  height: 44px;
`;
const CardTitle = styled.span`
  margin: 0 14px 0 11px;
  padding-bottom: 1px;
  font-size: 38.5px;
  color: ${C.ink};
  -webkit-text-stroke: 1.4px ${C.ink};
`;
const RankText = styled.p`
  position: relative;
  margin: 27px 0 0 5px;
  font-size: 33.5px;
  line-height: 36px;
  color: ${C.grey};
`;
const Hot = styled.b`
  padding: 0 5px;
  color: #d2480f;
  font-size: 33px;
`;
const Vote = styled.div`
  position: relative;
  margin: 22px 10px 0 12px;
  border: 5px solid #fffefd;
  border-radius: 40px;
  display: grid;
  grid-template-columns: 1fr 1fr;
  gap: 6px;
  background: #fffefd;
  overflow: hidden;
`;
const VoteSide = styled.div<{ $bg: string; $fg: string; $shift: number }>`
  height: 64px;
  padding: 6px 0 0 ${(p) => p.$shift}px;
  background: ${(p) => p.$bg};
  color: ${(p) => p.$fg};
  font-size: 23px;
`;
const VsText = styled.span`
  width: 44px;
  height: 44px;
  border-radius: 50%;
  background: linear-gradient(180deg, #de4f4b, #f2a29d);
  color: #fff;
  font-size: 25px;
  font-weight: 800;
  font-style: italic;
  letter-spacing: -2.5px;
  line-height: 44px;
  text-align: center;
`;

function CardsRow() {
  return (
    <Cards>
      <Card>
        <CardArt width="255" height="107" viewBox="0 0 255 107">
          <path d="M47 0H255V107H240L232 22H98L95 75H35V107H0V29H45z" fill="#fdefec" opacity="0.750" />
          <path d="M122 49H197L200 107H143V97L172 90V107H121zM71 92H107V107H69z" fill="#fce7e5" />
        </CardArt>
        <CardHead>
          <svg width="44" height="44" viewBox="0 0 44 44">
            <defs><linearGradient id="rank" x2="0" y2="1"><stop stopColor="#de4f4b" /><stop offset="1" stopColor="#f2a29d" /></linearGradient></defs>
            <circle cx="22" cy="22" r="22" fill="url(#rank)" />
            <path d="M9 18h6l-.5 15H8zM16.500 11h11l.5 22H16zM30 22h4.500l1.500 11h-6z" fill="#fff" />
            <text x="22" y="26" fontSize="12" fontWeight="700" textAnchor="middle" fill="#e06a66" fontFamily="Inter, sans-serif">1</text>
          </svg>
          <CardTitle>人气榜</CardTitle>
          <svg width="14" height="22" viewBox="0 0 14 22"><path d="M2 2l9.500 9L2 20" stroke="#b5b0ae" strokeWidth="2.400" fill="none" /></svg>
        </CardHead>
        <RankText>A股市场排名第<Hot>5</Hot>名</RankText>
      </Card>
      <Card>
        <CardArt width="241" height="107" viewBox="0 0 241 107">
          <path d="M0 0H241V50Q200 14 130 21L110 35 95 22H46L56 107H15z" fill="#fdecea" opacity="0.750" />
          <path d="M67 38H96L99 82 122 38H180Q205 36 228 54L208 74Q185 56 174 70 170 84 190 92L212 107H160L143 80 128 107H76z" fill="#fce7e6" />
        </CardArt>
        <CardHead>
          <VsText>VS</VsText>
          <CardTitle>多空看盘</CardTitle>
        </CardHead>
        <Vote>
          <VoteSide $bg="#fbdad7" $fg="#c8402a" $shift={105}>看涨</VoteSide>
          <VoteSide $bg="#d6eddc" $fg="#2f8f55" $shift={62}>看跌</VoteSide>
        </Vote>
      </Card>
    </Cards>
  );
}

/* ---------- bottom bar ---------- */

const Bottom = styled.footer`
  position: relative;
  flex: 1;
  border-top: 1px solid #cfd0d2;
  background: #f7f8fa;
  display: grid;
  grid-template-columns: 252px repeat(4, 207px);
`;
const Index = styled.div`
  display: flex;
  flex-direction: column;
  align-items: center;
  padding-top: 8px;
`;
const IndexRow = styled.div`
  width: 207px;
  margin: 8px 0 0 31px;
  display: flex;
  align-items: center;
  justify-content: space-between;
`;
const NavItem = styled.div`
  display: flex;
  flex-direction: column;
  align-items: center;
  gap: 15px;
  padding-top: 6px;
  font-size: 32px;
  color: ${C.grey};
`;

const navStroke = { stroke: C.grey, strokeWidth: 2.6, fill: "none", strokeLinecap: "round" as const, strokeLinejoin: "round" as const };

function BottomBar() {
  return (
    <Bottom>
      <Index>
        <svg width="20" height="8" viewBox="0 0 20 8"><path d="M0 7L10 0l10 7z" fill="#777" /></svg>
        <Txt $size={37.5} $color={C.red} $ls={-1.9} $mt={11}>3647.55</Txt>
        <IndexRow>
          <Txt $size={32} $color={C.grey}>上证</Txt>
          <Txt $size={35} $color={C.red} $ls={-2.3}>0.34%</Txt>
        </IndexRow>
      </Index>
      <NavItem>
        <svg width="60" height="60" viewBox="0 0 60 60">
          <path d="M14.700 9.700A25.500 25.500 0 0 1 51.500 43.500L59 38.700M51.500 43.500L52.500 36" {...navStroke} />
          <path d="M45.700 50.200A25.500 25.500 0 0 1 8.500 17L0.500 20.500M8.500 17L7 24" {...navStroke} />
          <path d="M21.500 18L30 27l8.500-9M30 27V43M21 28.500H39M21 36H39" {...navStroke} strokeLinecap="butt" />
        </svg>
        交易
      </NavItem>
      <NavItem>
        <svg width="60" height="60" viewBox="0 0 60 60">
          <path d="M40 6H14Q6 6 6 14V46Q6 54 14 54H46Q54 54 54 46V21" {...navStroke} />
          <path d="M22 38l4-9L44.500 12l3.500 3.500L30 33z" fill={C.grey} />
          <path d="M49 11L52 8.500" {...navStroke} strokeWidth="5" />
        </svg>
        发帖
      </NavItem>
      <NavItem>
        <svg width="60" height="60" viewBox="0 0 60 60">
          <rect x="7" y="8" width="20" height="20" rx="3" {...navStroke} />
          <rect x="7" y="32.500" width="20" height="20" rx="3" {...navStroke} />
          <rect x="32" y="32.500" width="20" height="20" rx="3" {...navStroke} />
          <rect x="33.500" y="9" width="16.500" height="16.500" rx="2.500" transform="rotate(45 41.750 17.250)" {...navStroke} />
        </svg>
        功能
      </NavItem>
      <NavItem>
        <svg width="60" height="60" viewBox="0 0 60 60">
          <circle cx="29.500" cy="30" r="25" {...navStroke} />
          {[18.5, 29.5, 40.5].map((x) => <circle key={x} cx={x} cy="30" r="3" fill={C.grey} />)}
        </svg>
        设自选
      </NavItem>
    </Bottom>
  );
}

export default function App() {
  return (
    <Page>
      <Global />
      <Status />
      <Header />
      <Banner>
        <Txt $size={39} $color={C.orange}>一键开通科创成长层权限！把握打新、交易机会</Txt>
        <Cross size={29} color={C.orange} />
      </Banner>
      <QuoteBlock />
      <Notice>
        <svg width="49" height="42" viewBox="0 0 49 42">
          <path d="M3 13Q3 11 5 11H11L23 2V40L11 31H5Q3 31 3 29z" stroke={C.orange} strokeWidth="2.800" fill="none" strokeLinejoin="round" />
          <path d="M30 12Q37 21 30 30M33 4Q46 9 46 21T33 38" stroke={C.orange} strokeWidth="2.800" fill="none" strokeLinecap="round" />
        </svg>
        <NoticeText>
          <Txt $size={36}>股东大会：</Txt>
          <Txt $size={36} $ls={-0.6}>于2025-08-25召开2025年第二次临时股...</Txt>
        </NoticeText>
        <Cross size={28} color="#a3a3a3" />
      </Notice>
      <PeriodTabs>
        <Tab><TabText>分时</TabText></Tab>
        <Tab $on><TabText>五日</TabText></Tab>
        <Tab><TabText>日K</TabText></Tab>
        <Tab><TabText>周K</TabText></Tab>
        <Tab><TabText>月K</TabText></Tab>
        <Tab>
          <TabText>
            更多
            <MoreMark width="24" height="40" viewBox="0 0 24 40">
              <circle cx="13" cy="8" r="8" fill="#f02424" />
              <path d="M6 22h14L13 33z" fill={C.grey} />
            </MoreMark>
          </TabText>
        </Tab>
        <GearCell><Gear /></GearCell>
      </PeriodTabs>
      <Legend>
        <Txt $size={32.7} $color={C.yellow}>均价：</Txt>
        <Txt $size={34} $color={C.yellow} $ls={-1}>18.28</Txt>
        <Txt $size={32.7} $color={C.red} $ml={11}>最新：</Txt>
        <Txt $size={34} $color={C.red} $ls={-1}>18.65</Txt>
        <Txt $size={34} $color={C.red} $ls={-0.9} $ml={22}>5.35</Txt>
        <Txt $size={34} $color={C.red} $ls={-2} $ml={21}>40.23%</Txt>
      </Legend>
      <PriceChart />
      <Macd />
      <PromoWrap>
        <Promo>
          <svg width="43" height="38" viewBox="0 0 43 38">
            <path d="M0 12h4V27H0zM8 12L38 3V0H42V38H38V34L29 31.500 27 34.500 15 31.500 14 28 8 26z" fill="#ea5504" />
          </svg>
          <PromoText><Txt $size={36} $color={C.orange} $ls={-0.25}>期货开户即享T+0日内交易，立即开通&gt;&gt;</Txt></PromoText>
          <Divider />
          <Cross size={30} color={C.orange} />
        </Promo>
      </PromoWrap>
      <SectionTabs>
        {["股吧", "盘口", "资讯", "公告", "研报", "财务", "资料"].map((t, i) => (
          <Tab key={t} $on={i === 0}><TabText>{t}</TabText></Tab>
        ))}
      </SectionTabs>
      <CardsRow />
      <BottomBar />
    </Page>
  );
}
